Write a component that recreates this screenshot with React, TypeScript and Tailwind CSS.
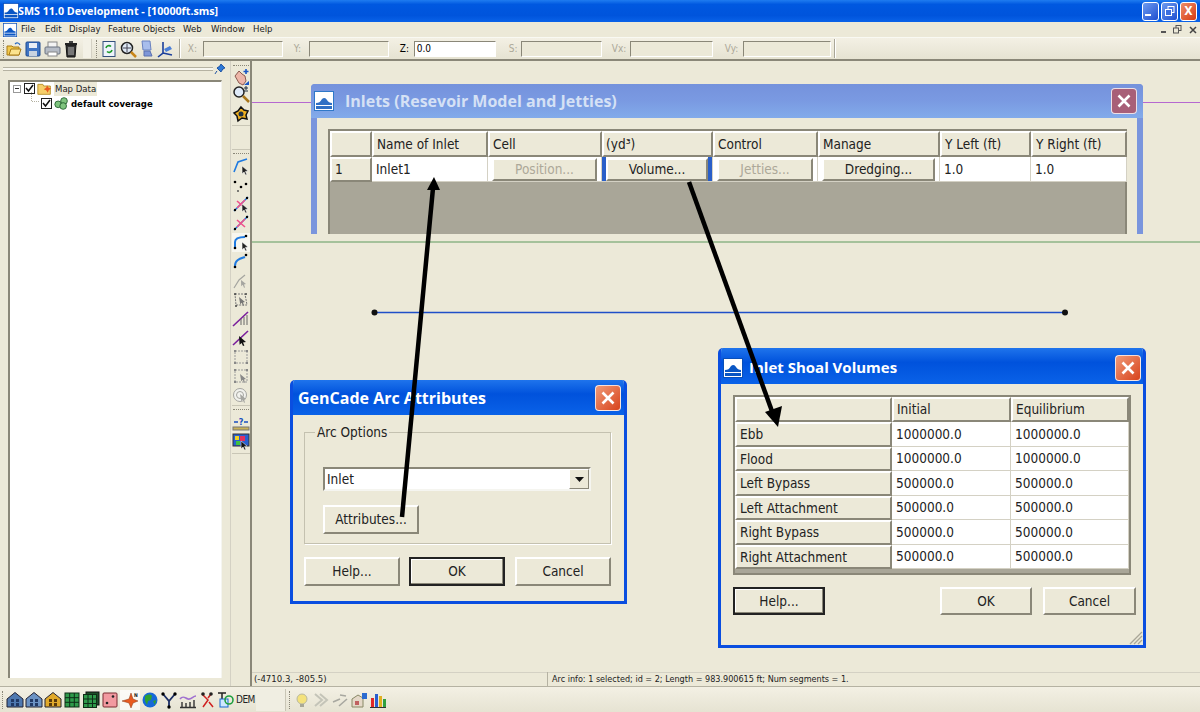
import type { ReactNode } from 'react';

const ui = { fontFamily: '"DejaVu Sans Condensed", "Noto Sans", sans-serif' };
const titleFont = { fontFamily: '"Open Sans", "Noto Sans", sans-serif' };

function Ico({ children }: { children: ReactNode }) {
  return (
    <svg width="18" height="18" viewBox="0 0 18 18" className="shrink-0">
      {children}
    </svg>
  );
}

const Arrow = () => <path d="M10 9l6 5-2.600 .4 1.500 3-1.400 .6-1.400-3-2 1.800z" fill="#222" stroke="#fff" strokeWidth=".5" />;

function Logo({ faded = false }: { faded?: boolean }) {
  const blue = faded ? '#2f6fc4' : '#0a56c4';
  return (
    <svg width="20" height="20" viewBox="0 0 20 20" className="shrink-0">
      <rect x=".5" y=".5" width="19" height="19" fill="#fff" stroke={faded ? '#2f78c8' : '#0a4fb8'} />
      <path d="M2 12c3 0 4-1 6-4 2-2 4-1 5 1 1 2 3 3 5 3v2H2z" fill={blue} />
      <rect x="2" y="15" width="16" height="3" fill={blue} />
    </svg>
  );
}

// top toolbar
const topFile = [
  <Ico key="open"><path d="M2 6h5l1 1h6v8H2z" fill="#f2c94c" stroke="#a87a14" /><path d="M4 15l2-6h10l-2 6z" fill="#fbe38e" stroke="#a87a14" /><path d="M10 4c2-2 4-1 5 1" fill="none" stroke="#2a6ac0" strokeWidth="1.200" /></Ico>,
  <Ico key="save"><rect x="2" y="2" width="14" height="14" rx="1" fill="#3f74c4" stroke="#1e4a90" /><rect x="5" y="3" width="8" height="5" fill="#e9eef6" /><rect x="5" y="11" width="8" height="5" fill="#c9d3e0" /></Ico>,
  <Ico key="print"><rect x="5" y="2" width="9" height="6" fill="#f4f4f4" stroke="#888" /><rect x="2" y="7" width="15" height="7" rx="1" fill="#b6bcc6" stroke="#6b7280" /><rect x="5" y="12" width="9" height="4" fill="#fff" stroke="#888" /></Ico>,
  <Ico key="trash"><path d="M4 5h10l-1 12H5z" fill="#333" stroke="#111" /><rect x="3" y="3" width="12" height="2" fill="#222" /><rect x="7" y="1" width="4" height="2" fill="#444" /><path d="M7 7v8M9 7v8M11 7v8" stroke="#bbb" /></Ico>,
];
const topView = [
  <Ico key="refresh"><rect x="3" y="1.500" width="12" height="15" fill="#eef3fb" stroke="#33507c" /><path d="M6 8a3 3 0 0 1 5-1.500M12 10a3 3 0 0 1-5 1.500" fill="none" stroke="#1f9a2c" strokeWidth="1.600" /></Ico>,
  <Ico key="zoom"><circle cx="8" cy="8" r="5.500" fill="#dfe9f5" stroke="#222" strokeWidth="1.500" /><path d="M8 4v8M4 8h8" stroke="#445" /><path d="M12 12l5 5" stroke="#c9861a" strokeWidth="2.500" /></Ico>,
  <Ico key="pc"><path d="M5 1h8l1 9H6z" fill="#a8bdec" stroke="#6a82c0" /><path d="M7 11h6l2 5H7z" fill="#7f97d8" stroke="#5a70b0" /></Ico>,
  <Ico key="axes"><path d="M7 2v11l-5 4M7 13l9 2" fill="none" stroke="#1b3f9c" strokeWidth="1.600" /><path d="M8 9l6-3 2 3-6 3z" fill="#4b7fd8" /></Ico>,
];

// left strip
const stripTop = [
  <Ico key="hand"><path d="M3 8l4-5 3 3 3 2 1 5-3 4-4-2z" fill="#eeb6a8" stroke="#8a5a50" /><path d="M14 1v5M11.500 3.500h5" stroke="#1a56c4" strokeWidth="1.600" /><path d="M12 17l5-4v4z" fill="#1a56c4" /></Ico>,
  <Ico key="zplus"><circle cx="7" cy="7" r="5" fill="#dfeaf8" stroke="#222" strokeWidth="1.500" /><path d="M11 11l6 6" stroke="#a8761a" strokeWidth="2.500" /><path d="M14 1v4M12 3h4M12 6h4" stroke="#234" /></Ico>,
  <Ico key="blob"><path d="M9 2l3 3 4 1-2 4 1 4-5-1-4 3-1-5-3-3 4-2z" fill="#f0b020" stroke="#111" strokeWidth="1.500" /><circle cx="9" cy="9" r="2.500" fill="#234" /></Ico>,
];

function ArcIcon({ kind }: { kind: number }) {
  const dim = '#a5a5a0';
  if (kind === 0) return <Ico><path d="M2 15L6 5l9-3" fill="none" stroke="#1f7ae0" strokeWidth="1.600" /><Arrow /></Ico>;
  if (kind === 1) return <Ico><circle cx="3" cy="6" r="1.300" /><circle cx="9" cy="11" r="1.300" /><circle cx="14" cy="8" r="1.300" /><circle cx="6" cy="15" r="1" fill="#555" /></Ico>;
  if (kind === 2) return <Ico><path d="M2 16L16 2" stroke="#1f7ae0" strokeWidth="1.500" /><path d="M5 6l8 7M13 5l-8 8" stroke="#f0508a" strokeWidth="1.600" /><circle cx="15" cy="3" r="1.200" /><circle cx="3" cy="15" r="1.200" /><Arrow /></Ico>;
  if (kind === 3) return <Ico><path d="M2 16L16 2" stroke="#1f7ae0" strokeWidth="1.500" /><path d="M5 6l8 7M13 5l-8 8" stroke="#f0508a" strokeWidth="1.600" /><circle cx="15" cy="3" r="1.200" /><circle cx="3" cy="15" r="1.200" /></Ico>;
  if (kind === 4) return <Ico><path d="M3 14V9c0-4 4-5 10-5" fill="none" stroke="#1f7ae0" strokeWidth="2" /><circle cx="3" cy="15" r="1.300" /><circle cx="14" cy="3" r="1.300" /><Arrow /></Ico>;
  if (kind === 5) return <Ico><path d="M3 14c0-6 4-7 10-9" fill="none" stroke="#1f7ae0" strokeWidth="2" /><circle cx="3" cy="15" r="1.300" /><circle cx="14" cy="3" r="1.300" /></Ico>;
  if (kind === 6) return <Ico><path d="M2 16l5-8 6-5" fill="none" stroke={dim} strokeWidth="1.200" /><path d="M9 8l5 4-2 .4 1 3-1 .4-1.200-3-1.600 1.400z" fill={dim} /></Ico>;
  if (kind === 7) return <Ico><path d="M3 3h10l2 11H4z" fill="none" stroke="#777" strokeDasharray="2 1" /><circle cx="3" cy="3" r="1" fill="#444" /><circle cx="14" cy="3" r="1" fill="#444" /><circle cx="4" cy="15" r="1" fill="#444" /><path d="M7 6l6 5-2 .4 1 3-1 .4-1.200-3-1.600 1.400z" fill="#777" /></Ico>;
  if (kind === 8) return <Ico><path d="M1 16L16 2" stroke="#7a1e9c" strokeWidth="1.600" /><path d="M9 15V9M12 15V7M15 15V5" stroke="#666" /></Ico>;
  if (kind === 9) return <Ico><path d="M1 16L16 2" stroke="#7a1e9c" strokeWidth="1.600" /><path d="M7 7l7 6-3 .4 1.400 3-1.400 .6-1.400-3-2 1.800z" fill="#111" /></Ico>;
  if (kind === 10) return <Ico><rect x="3" y="3" width="12" height="12" fill="none" stroke="#999" strokeDasharray="2 1" /><path d="M2 2h2v2H2zM14 2h2v2h-2zM2 14h2v2H2zM14 14h2v2h-2z" fill="#888" /></Ico>;
  if (kind === 11) return <Ico><rect x="3" y="3" width="12" height="12" fill="none" stroke="#999" strokeDasharray="2 1" /><path d="M2 2h2v2H2zM14 2h2v2h-2zM2 14h2v2H2z" fill="#888" /><path d="M8 7l6 5-2 .4 1 3-1 .4-1.200-3-1.600 1.400z" fill="#888" /></Ico>;
  return <Ico><circle cx="8" cy="9" r="6.500" fill="#f2f2ee" stroke={dim} /><circle cx="8" cy="9" r="3.500" fill="none" stroke={dim} /><path d="M8 8l6 5-2 .4 1 3-1 .4-1.200-3-1.600 1.400z" fill={dim} /></Ico>;
}

const stripBottom = [
  <Ico key="q"><path d="M2 8h4M12 8h4" stroke="#1a4fc0" strokeWidth="1.500" /><text x="9" y="11" textAnchor="middle" fontSize="9" fontWeight="700" fill="#1a4fc0">?</text><rect x="1" y="13" width="16" height="3" fill="#c9b25a" stroke="#777" /></Ico>,
  <Ico key="map"><rect x="1" y="2" width="16" height="12" fill="#2a5fd0" stroke="#333" /><path d="M3 4h4v4H3z" fill="#f0d020" /><path d="M8 4h5v5H8z" fill="#e03060" /><path d="M4 9h4v4H4z" fill="#40c040" /><path d="M9 9l6 5-2.500 .4 1.400 3-1.400 .6-1.400-3-2 1.800z" fill="#111" stroke="#fff" strokeWidth=".5" /></Ico>,
];

function House({ fill, dot }: { fill: string; dot: string }) {
  return (
    <Ico>
      <path d="M9 1.500L17 8v8H1V8z" fill={fill} stroke="#223" />
      <path d="M5 8h3v3H5zM10 8h3v3h-3zM5 12h3v3H5zM10 12h3v3h-3z" fill={dot} />
    </Ico>
  );
}

function GridIcon({ stacked = false }: { stacked?: boolean }) {
  return (
    <Ico>
      {stacked && <rect x="4" y="1" width="13" height="13" fill="#1d4d28" stroke="#111" />}
      <rect x={stacked ? 1.500 : 2} y={stacked ? 3.500 : 2} width={stacked ? 13 : 14} height={stacked ? 13 : 14} fill="#2f9a4a" stroke="#0e2c16" />
      <path d={stacked ? 'M6 3.500v13M10.500 3.500v13M1.500 8h13M1.500 12.500h13' : 'M6.700 2v14M11.300 2v14M2 6.700h14M2 11.300h14'} stroke="#0e2c16" />
    </Ico>
  );
}

const bottomA = [
  <House key="h1" fill="#4f79b0" dot="#223a66" />,
  <House key="h2" fill="#6c93c4" dot="#223a66" />,
  <House key="h3" fill="#e0a92a" dot="#5a3a0a" />,
  <GridIcon key="g1" />,
  <GridIcon key="g2" stacked />,
  <Ico key="die"><rect x="2" y="2" width="14" height="14" rx="1" fill="#f29aa0" stroke="#7a2a30" /><circle cx="12" cy="5.500" r="1.300" fill="#222" /><circle cx="6" cy="12" r="1.300" fill="#222" /></Ico>,
];
const bottomB = [
  <Ico key="globe"><circle cx="9" cy="9" r="7.500" fill="#1668d8" /><path d="M4 5c3-2 6-2 7 0l-1 4-3 1-1 4-2-4zM12 10l3-1-1 5z" fill="#2fa030" /></Ico>,
  <Ico key="tree"><path d="M3 3l6 7 6-7M9 10v6" fill="none" stroke="#1d2f66" strokeWidth="1.800" /><circle cx="3" cy="3" r="1.700" /><circle cx="15" cy="3" r="1.700" /><circle cx="9" cy="16" r="1.700" /></Ico>,
  <Ico key="chart"><path d="M1 8c3-4 5-1 8 0s5-3 8-3" fill="none" stroke="#a070d0" strokeWidth="1.600" /><path d="M3 16v-5M7 16v-4M11 16v-5M15 16V9M1 16.500h16" stroke="#333" strokeWidth="1.400" /></Ico>,
  <Ico key="cross"><path d="M4 3l6 6-5 7M13 3l-3 4M11 11l4 5" fill="none" stroke="#d02020" strokeWidth="1.500" /><circle cx="5" cy="3" r="1.800" fill="#222" /><circle cx="13" cy="3" r="1.800" fill="#222" /></Ico>,
  <Ico key="tq"><path d="M1 2h8M5 2v10" stroke="#222" strokeWidth="1.500" /><rect x="3" y="8" width="8" height="8" fill="#cfe8ff" stroke="#1a6ad0" /><circle cx="12" cy="9" r="4" fill="none" stroke="#20a040" strokeWidth="1.600" /></Ico>,
];
const bottomC = [
  <Ico key="bulb"><circle cx="9" cy="8" r="5" fill="#f4e27c" stroke="#b8b8a0" /><rect x="7" y="13" width="4" height="3" fill="#a8a898" /></Ico>,
  <Ico key="chev"><path d="M3 3l7 6-7 6M8 3l7 6-7 6" fill="none" stroke="#c4c4b8" strokeWidth="2" /></Ico>,
  <Ico key="arrows"><path d="M2 11l7-3M8 15l8-7M9 4l6 1" fill="none" stroke="#a8a8a0" strokeWidth="1.600" /></Ico>,
  <Ico key="housec"><path d="M2 8l6-4 5 3v9H2z" fill="#e4d8c8" stroke="#886" /><rect x="5" y="10" width="4" height="4" fill="#c06060" /><rect x="12" y="2" width="5" height="6" fill="#2a6ad0" /></Ico>,
  <Ico key="bars"><rect x="2" y="7" width="3" height="9" fill="#e02828" /><rect x="6" y="3" width="3" height="13" fill="#2a5fd0" /><rect x="10" y="5" width="3" height="11" fill="#e0b020" /><rect x="14" y="8" width="3" height="8" fill="#30a040" /><path d="M1 16.500h16" stroke="#333" /></Ico>,
];

const Grip = ({ vertical = false }: { vertical?: boolean }) =>
  vertical ? (
    <div className="w-[2px] h-[18px] shrink-0 border-l border-dotted border-[#8a8778]" />
  ) : (
    <div className="h-[2px] w-[16px] shrink-0 border-t border-dotted border-[#8a8778]" />
  );

const Sep = () => <div className="w-[2px] h-[19px] shrink-0 border-l border-[#a9a698] border-r border-r-white" />;

function TopField({ label, box, input, value, active = false }: { label: string; box: string; input: string; value?: string; active?: boolean }) {
  return (
    <div className="flex items-center shrink-0">
      <span className={`text-[10px] ${box} ${active ? 'text-black' : 'text-[#aca899]'}`}>{label}</span>
      <div
        className={`h-[16px] border border-t-[#8a8778] border-l-[#8a8778] border-r-white border-b-white text-[10px] leading-[14px] pl-[2px] ${input} ${active ? 'bg-white' : 'bg-[#ece9d8]'}`}
      >
        {value}
      </div>
    </div>
  );
}

function XpBtn({ red = false, children }: { red?: boolean; children: ReactNode }) {
  return (
    <div
      className={`w-[17px] h-[19px] rounded-[3px] border border-white flex items-center justify-center text-white text-[12px] font-bold leading-none ${
        red ? 'bg-[linear-gradient(135deg,#ef8d6a,#d63a12)]' : 'bg-[linear-gradient(135deg,#6d9bf0,#1f4fd0)]'
      }`}
    >
      {children}
    </div>
  );
}

function Close({ faded = false }: { faded?: boolean }) {
  return (
    <div
      className={`w-[26px] h-[26px] rounded-[4px] border border-white/80 flex items-center justify-center ${
        faded ? 'bg-[#a85f78]' : 'bg-[linear-gradient(135deg,#f09a78,#d8431c)]'
      }`}
    >
      <svg width="16" height="16" viewBox="0 0 16 16">
        <path d="M2.500 2.500l11 11M13.500 2.500l-11 11" stroke="#fff" strokeWidth="2.600" />
      </svg>
    </div>
  );
}

function Btn({ children, size = '', def = false, disabled = false }: { children: ReactNode; size?: string; def?: boolean; disabled?: boolean }) {
  return (
    <div
      className={`flex items-center justify-center shrink-0 bg-[#ece9d8] border-2 text-[13.500px] ${size} ${
        def
          ? 'border-[#222] shadow-[inset_-1px_-1px_0_#8a8778,inset_1px_1px_0_#fff]'
          : 'border-t-white border-l-white border-r-[#8a8778] border-b-[#8a8778]'
      } ${disabled ? 'text-[#aca899]' : 'text-[#222]'}`}
    >
      {children}
    </div>
  );
}

const Head = ({ children, pad = 'pl-[3px]' }: { children?: ReactNode; pad?: string }) => (
  <div
    className={`bg-[#ece9d8] border-2 border-t-white border-l-white border-r-[#8a8778] border-b-[#8a8778] flex items-center text-[13.500px] text-[#222] overflow-hidden whitespace-nowrap ${pad}`}
  >
    {children}
  </div>
);

const Val = ({ children }: { children: ReactNode }) => (
  <div className="bg-white border-r border-b border-[#d4d1c4] flex items-center pl-[4px] text-[13.500px] text-[#222]">{children}</div>
);

const BtnCell = ({ children, disabled = false, blue = false }: { children: ReactNode; disabled?: boolean; blue?: boolean }) => (
  <div className={`bg-white flex py-[1px] px-[4px] border-r border-[#d4d1c4] border-b ${blue ? 'bg-[linear-gradient(90deg,#2a5fc8_4px,#fff_4px,#fff_calc(100%-4px),#2a5fc8_calc(100%-4px))]' : ''}`}>
    <Btn disabled={disabled} size="flex-1 min-w-0 h-[23px]">
      {children}
    </Btn>
  </div>
);

const shoalRows = [
  ['Ebb', '1000000.0', '1000000.0'],
  ['Flood', '1000000.0', '1000000.0'],
  ['Left Bypass', '500000.0', '500000.0'],
  ['Left Attachment', '500000.0', '500000.0'],
  ['Right Bypass', '500000.0', '500000.0'],
  ['Right Attachment', '500000.0', '500000.0'],
];

export default function App() {
  return (
    <div className="w-[1200px] h-[712px] flex flex-col overflow-hidden bg-[#ece9d8] text-black" style={ui}>
      {/* title bar */}
      <div className="h-[22px] shrink-0 flex items-center pl-[1px] pr-[3px] bg-[linear-gradient(180deg,#1f7cf0_0%,#0058e0_20%,#0054dc_70%,#0a62e8_100%)]">
        <div className="scale-[.8]"><Logo /></div>
        <span className="text-white text-[10.700px] font-bold -ml-[3px] whitespace-nowrap" style={titleFont}>SMS 11.0 Development - [10000ft.sms]</span>
        <div className="ml-auto flex gap-[2px]">
          <XpBtn><span className="w-[6px] h-[2px] bg-white mt-[8px] mr-[5px]" /></XpBtn>
          <XpBtn>
            <svg width="12" height="12" viewBox="0 0 12 12" fill="none" stroke="#fff"><rect x="4" y="1.500" width="6" height="6" /><rect x="1.500" y="4.500" width="6" height="6" fill="#3a6ee0" /></svg>
          </XpBtn>
          <XpBtn red>X</XpBtn>
        </div>
      </div>

      {/* menu */}
      <div className="h-[16px] shrink-0 flex items-center border-b border-b-white/70 text-[9.500px] text-[#222] pl-[3px] pr-[3px] whitespace-nowrap">
        <div className="scale-[.7] origin-left w-[18px] shrink-0"><Logo /></div>
        <span className="w-[24px]">File</span>
        <span className="w-[24px]">Edit</span>
        <span className="w-[39px]">Display</span>
        <span className="w-[75px]">Feature Objects</span>
        <span className="w-[28px]">Web</span>
        <span className="w-[42px]">Window</span>
        <span>Help</span>
        <div className="ml-auto flex items-center gap-[7px]">
          <div className="w-[5px] h-[2px] bg-[#555] mt-[5px]" />
          <svg width="9" height="9" viewBox="0 0 9 9" fill="none" stroke="#555"><rect x="3" y=".5" width="5" height="5" /><rect x=".5" y="3" width="5" height="5" fill="#ece9d8" /></svg>
          <svg width="8" height="8" viewBox="0 0 8 8"><path d="M1 1l6 6M7 1L1 7" stroke="#444" strokeWidth="1.500" /></svg>
        </div>
      </div>

      {/* main toolbar */}
      <div className="h-[23px] shrink-0 flex items-center pl-[3px] border-b-2 border-b-[#8a8778] bg-[linear-gradient(180deg,#f3f0e4,#e6e3d2)]">
        <Grip vertical />
        <div className="flex gap-[1px]">{topFile}</div>
        <div className="w-[9px] h-[19px] ml-[3px] mr-[4px] bg-[#f3f1e6] border-r border-[#d4d1c4]" />
        <Grip vertical />
        <div className="flex gap-[.6px] ml-[2px]">{topView}</div>
        <div className="ml-[5px]"><Sep /></div>
        <div className="ml-[7px] flex gap-[11px]">
          <TopField label="X:" box="w-[15px]" input="w-[80px]" />
          <TopField label="Y:" box="w-[15px]" input="w-[80px]" />
          <TopField label="Z:" box="w-[14px]" input="w-[82px]" value="0.0" active />
        </div>
        <div className="ml-[13px]"><TopField label="S:" box="w-[12px]" input="w-[81px]" /></div>
        <div className="ml-[10px]"><TopField label="Vx:" box="w-[18px]" input="w-[83px]" /></div>
        <div className="ml-[12px]"><TopField label="Vy:" box="w-[18px]" input="w-[88px]" /></div>
        <div className="ml-[3px]"><Sep /></div>
      </div>

      {/* body */}
      <div className="flex-1 flex min-h-0">
        {/* project explorer */}
        <div className="w-[231px] shrink-0 flex flex-col border-r border-[#d4d1c4]">
          <div className="h-[15px] shrink-0 flex items-center pl-[3px] pr-[4px]">
            <div className="h-[4px] w-[212px] border-y border-[#b5b2a2] bg-white/60" />
            <svg width="12" height="12" viewBox="0 0 12 12" className="ml-[1px]"><path d="M7 1l4 4-2 1-2 3-4-4 3-2zM3 8l-2 3" fill="#2f7ad8" stroke="#1a4fa0" /></svg>
          </div>
          <div className="mt-[4px] ml-[8px] mr-[8px] mb-[8px] flex-1 bg-white border-t-2 border-l-2 border-[#8a8778] border-r border-r-[#f5f5f0] relative">
            <div className="flex items-center h-[15px] -mt-[1px] ml-[3px]">
              <div className="w-[8px] h-[8px] border border-[#999] flex items-center justify-center"><div className="w-[4px] h-px bg-[#333]" /></div>
              <div className="w-[11px] h-[11px] ml-[3px] border border-[#222] flex items-center justify-center">
                <svg width="9" height="9" viewBox="0 0 9 9"><path d="M1 4l2.500 3L8 1" fill="none" stroke="#111" strokeWidth="1.500" /></svg>
              </div>
              <svg width="15" height="15" viewBox="0 0 18 18" className="ml-[2px]"><path d="M1 4h6l1 2h8v10H1z" fill="#f6cf6a" stroke="#b08a20" /><path d="M12 5l2 3 3 1-3 2-1 3-2-3-3-1 3-2z" fill="#e85a20" /></svg>
              <span className="ml-[2px] text-[9.500px] leading-[14px] bg-[#ece9d8] px-px text-[#222]">Map Data</span>
            </div>
            <div className="flex items-center h-[15px] ml-[31px]">
              <div className="w-[11px] h-[11px] border border-[#222] flex items-center justify-center">
                <svg width="9" height="9" viewBox="0 0 9 9"><path d="M1 4l2.500 3L8 1" fill="none" stroke="#111" strokeWidth="1.500" /></svg>
              </div>
              <svg width="15" height="15" viewBox="0 0 18 18" className="ml-[2px]"><circle cx="5" cy="10" r="4" fill="#7fc47f" stroke="#1d5a2a" /><circle cx="12" cy="6" r="4" fill="#7fc47f" stroke="#1d5a2a" /><circle cx="11" cy="12" r="4" fill="#7fc47f" stroke="#1d5a2a" /></svg>
              <span className="ml-[2px] text-[9.500px] font-bold leading-[14px] whitespace-nowrap">default coverage</span>
            </div>
            <svg width="20" height="20" className="absolute left-[21px] top-[10px]"><path d="M.5 0v9.500H9" fill="none" stroke="#b5b2a2" strokeDasharray="1 1" /></svg>
          </div>
        </div>

        {/* tool strip */}
        <div className="w-[21px] shrink-0 flex flex-col items-center border-r-2 border-r-[#8a8778] pl-px">
          <div className="mt-[3px] h-[62px] w-full border-b border-[#c9c6b6] flex flex-col items-center">
            <div className="mt-[1px] mb-[1px]"><Grip /></div>
            {stripTop.map((icon, i) => (
              <div key={i} className={`flex items-center justify-center ${i === 1 ? 'h-[16px]' : 'h-[18px]'} ${i === 2 ? 'mt-[3px]' : ''}`}>{icon}</div>
            ))}
          </div>
          <div className="h-[24px] w-full border-b border-[#c9c6b6]" />
          <div className="mt-[2px] h-[254px] w-full flex flex-col items-center border-b border-[#c9c6b6]">
            <div className="mt-[1px] mb-[1px]"><Grip /></div>
            {Array.from({ length: 13 }).map((_, i) => (
              <div key={i} className={`h-[19.200px] w-full flex items-center justify-center ${i === 4 ? 'bg-[#f7f6ef]' : ''}`}>
                <ArcIcon kind={i} />
              </div>
            ))}
          </div>
          <div className="mt-[2px] h-[46px] w-full flex flex-col items-center border-b border-[#c9c6b6]">
            <div className="mt-[1px] mb-[3px]"><Grip /></div>
            {stripBottom.map((icon, i) => (
              <div key={i} className="h-[18px] flex items-center justify-center">{icon}</div>
            ))}
          </div>
        </div>

        {/* canvas + status */}
        <div className="flex-1 flex flex-col min-w-0">
          <div className="flex-1 relative overflow-hidden">
            <svg width="948" height="611" viewBox="252 61 948 611" className="absolute inset-0">
              <path d="M252 102.500H1200" stroke="#b668d0" />
              <path d="M252 242H1200" stroke="#5f9a5f" />
              <path d="M374 312.500H1065" stroke="#1f4fc8" strokeWidth="1.400" />
              <circle cx="374.500" cy="312.500" r="3" fill="#111" />
              <circle cx="1065" cy="312.500" r="3" fill="#111" />
            </svg>

            {/* Inlets */}
            <div className="absolute left-[59px] top-[23px] w-[832px] h-[150px] overflow-hidden rounded-t-[4px] bg-[#7a95dd] flex flex-col px-[6px]">
              <div className="h-[34px] shrink-0 -mx-[6px] px-[3px] flex items-center bg-[linear-gradient(180deg,#7592dc,#7a9ae2_50%,#82abea)]">
                <Logo faded />
                <span className="ml-[11px] text-[16px] font-bold text-[#d5e1f5] whitespace-nowrap" style={titleFont}>Inlets (Resevoir Model and Jetties)</span>
                <div className="ml-auto mr-[3px]"><Close faded /></div>
              </div>
              <div className="flex-1 bg-[#ece9d8] pt-[11px] pl-[11px] pr-[10px] min-h-0">
                <div className="h-[105px] bg-[#a9a698] border-2 border-[#8a8778] border-b-0 grid grid-cols-[42px_116px_114px_111px_105px_122px_91px_96px] grid-rows-[26px_25px] content-start">
                  <Head />
                  <Head>Name of Inlet</Head>
                  <Head>Cell</Head>
                  <Head pad="pl-[2px]">(yd³)</Head>
                  <Head>Control</Head>
                  <Head>Manage</Head>
                  <Head>Y Left (ft)</Head>
                  <Head>Y Right (ft)</Head>
                  <Head>1</Head>
                  <Val>Inlet1</Val>
                  <BtnCell disabled>Position...</BtnCell>
                  <BtnCell blue>Volume...</BtnCell>
                  <BtnCell disabled>Jetties...</BtnCell>
                  <BtnCell>Dredging...</BtnCell>
                  <Val>1.0</Val>
                  <Val>1.0</Val>
                </div>
              </div>
            </div>

            {/* GenCade */}
            <div className="absolute left-[38px] top-[319px] w-[337px] h-[224px] flex flex-col rounded-t-[5px] overflow-hidden border-x-[3px] border-b-[3px] border-[#0a4ee0]">
              <div className="h-[35px] shrink-0 -mx-[3px] pl-[8px] pr-[6px] flex items-center bg-[linear-gradient(180deg,#1f74ec,#0052dc_40%,#0a62e8)]">
                <span className="text-[16px] font-bold text-white whitespace-nowrap" style={titleFont}>GenCade Arc Attributes</span>
                <div className="ml-auto"><Close /></div>
              </div>
              <div className="flex-1 bg-[#ece9d8] pt-[17px] pl-[11px] pr-[13px]">
                <div className="h-[112px] border border-[#c4c1b0] shadow-[1px_1px_0_#fff] pl-[18px] pr-[19px]">
                  <div className="-mt-[10px] -ml-[8px] w-fit px-[2px] bg-[#ece9d8] text-[13.500px] leading-[19px] text-[#222]">Arc Options</div>
                  <div className="mt-[25px] h-[24px] bg-white border-2 border-t-[#8a8778] border-l-[#8a8778] border-r-[#f5f5f0] border-b-[#f5f5f0] flex items-center pl-[2px] text-[13.500px] text-[#222]">
                    Inlet
                    <div className="ml-auto h-[20px] w-[20px] bg-[#ece9d8] border border-t-white border-l-white border-r-[#8a8778] border-b-[#8a8778] flex items-center justify-center">
                      <svg width="9" height="5" viewBox="0 0 9 5"><path d="M0 0h9L4.500 5z" fill="#111" /></svg>
                    </div>
                  </div>
                  <div className="mt-[14px]"><Btn size="w-[96px] h-[29px]">Attributes...</Btn></div>
                </div>
                <div className="mt-[13px] flex">
                  <Btn size="w-[96px] h-[29px]">Help...</Btn>
                  <div className="ml-[9px]"><Btn size="w-[96px] h-[29px]" def>OK</Btn></div>
                  <div className="ml-[10px]"><Btn size="w-[96px] h-[29px]">Cancel</Btn></div>
                </div>
              </div>
            </div>

            {/* Inlet Shoal Volumes */}
            <div className="absolute left-[466px] top-[287px] w-[428px] h-[300px] flex flex-col rounded-t-[5px] overflow-hidden border-x-[3px] border-b-[3px] border-[#0a4ee0]">
              <div className="h-[36px] shrink-0 -mx-[3px] pl-[5px] pr-[5px] pt-[3px] flex items-center bg-[linear-gradient(180deg,#1f74ec,#0052dc_40%,#0a62e8)]">
                <Logo />
                <span className="ml-[6px] text-[15px] font-bold text-white whitespace-nowrap" style={titleFont}>Inlet Shoal Volumes</span>
                <div className="ml-auto"><Close /></div>
              </div>
              <div className="flex-1 relative bg-[#ece9d8] pt-[11px] pl-[12px] pr-[12px]">
                <div className="w-[398px] h-[180px] bg-[#a9a698] border-2 border-[#8a8778] grid grid-cols-[157px_119px_118px] grid-rows-[25px_repeat(6,24.500px)] content-start">
                  <Head />
                  <Head>Initial</Head>
                  <Head>Equilibrium</Head>
                  {shoalRows.map(([name, a, b]) => (
                    <div key={name} className="contents">
                      <Head>{name}</Head>
                      <Val>{a}</Val>
                      <Val>{b}</Val>
                    </div>
                  ))}
                </div>
                <div className="mt-[12px] flex">
                  <Btn size="w-[92px] h-[28px]" def>Help...</Btn>
                  <div className="ml-[115px]"><Btn size="w-[92px] h-[28px]">OK</Btn></div>
                  <div className="ml-[11px]"><Btn size="w-[93px] h-[28px]">Cancel</Btn></div>
                </div>
                <svg width="14" height="14" viewBox="0 0 14 14" className="absolute right-0 bottom-0">
                  <path d="M13 1L1 13M13 5L5 13M13 9L9 13" stroke="#a9a698" strokeWidth="1.300" />
                </svg>
              </div>
            </div>

            {/* annotation arrows */}
            <svg width="948" height="611" viewBox="252 61 948 611" className="absolute inset-0 pointer-events-none">
              <path d="M402 517L433 188" stroke="#000" strokeWidth="4.500" />
              <path d="M434 177L427 190H440z" fill="#000" />
              <path d="M689 182L773 414" stroke="#000" strokeWidth="4.500" />
              <path d="M778 427L765 412L782 406z" fill="#000" />
            </svg>
          </div>

          <div className="h-[14px] shrink-0 flex items-center text-[9.500px] text-[#222] border-t border-[#d4d1c4] whitespace-nowrap">
            <span className="w-[296px] pl-[2px] border-r border-[#b5b2a2]">(-4710.3, -805.5)</span>
            <span className="pl-[4px] text-[9px]">Arc info: 1 selected; id = 2; Length = 983.900615 ft; Num segments = 1.</span>
          </div>
        </div>
      </div>

      {/* bottom toolbar */}
      <div className="h-[26px] shrink-0 flex items-center pl-[2px] border-t border-[#b5b2a2] bg-[linear-gradient(180deg,#f3f0e4,#e6e3d2)]">
        <Grip vertical />
        <div className="flex gap-[1px] ml-[2px]">{bottomA}</div>
        <div className="ml-[1px] w-[20px] h-[20px] bg-white/70 flex items-center justify-center">
          <Ico><path d="M1 10l7-2 2-6 2 6 5 2-5 2-2 5-2-5z" fill="#e85a20" stroke="#8a3410" strokeWidth=".5" /><text x="13" y="6" fontSize="5" fontWeight="700" fill="#222">N</text></Ico>
        </div>
        <div className="flex gap-[1px] ml-[1px]">{bottomB}</div>
        <span className="ml-[1px] text-[10px] tracking-[-.5px] w-[18px] text-[#222]">DEM</span>
        <div className="ml-[2px] w-[30px] h-[22px] bg-[#f0eee2] border-r border-[#c9c6b6]" />
        <div className="ml-[3px]"><Grip vertical /></div>
        <div className="flex gap-[1px] ml-[2px]">{bottomC}</div>
      </div>
    </div>
  );
}
